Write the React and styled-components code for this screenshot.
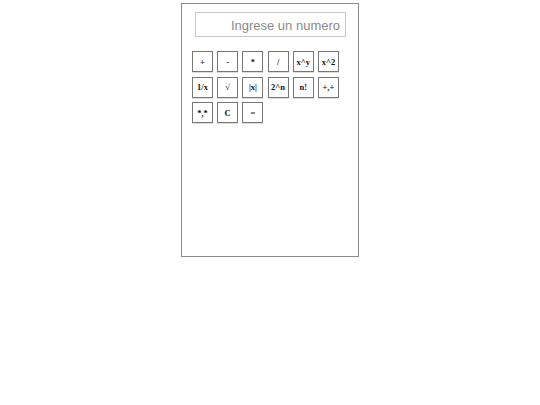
import React from 'react';
import styled, { createGlobalStyle } from 'styled-components';

const GlobalStyle = createGlobalStyle`
  body {
    margin: 0;
    background: #fff;
    font-family: "Liberation Serif", serif;
  }
`;

const Calculator = styled.div`
  box-sizing: border-box;
  width: 178px;
  height: 254px;
  margin: 3px auto 0;
  border: 1px solid #8a8a8a;
  padding: 8px 12px 0 10px;
  display: flex;
  flex-direction: column;
`;

const Display = styled.input`
  box-sizing: border-box;
  width: 151px;
  height: 25px;
  margin-left: 3px;
  border: 1px solid #c8c8c8;
  padding: 1px 5px 0;
  text-align: right;
  font-family: "Liberation Sans", Arial, sans-serif;
  font-size: 13px;
  color: #333;
  outline: none;
  &::placeholder {
    color: #8a8a8a;
  }
`;

const Keys = styled.div`
  display: grid;
  grid-template-columns: repeat(6, 21px);
  grid-auto-rows: 21px;
  column-gap: 4.2px;
  row-gap: 4.5px;
  margin-top: 14px;
`;

const Key = styled.button`
  box-sizing: border-box;
  width: 21px;
  height: 21px;
  padding: 0;
  background: #fff;
  border: 1px solid #777;
  box-shadow: 0 1px 0 #ddd;
  font-family: "Liberation Serif", "Times New Roman", serif;
  font-weight: bold;
  font-size: 8.5px;
  color: #111;
  cursor: pointer;
  display: flex;
  align-items: center;
  justify-content: center;
`;

const keys = [
  '+', '-', '*', '/', 'x^y', 'x^2',
  '1/x', '√', '|x|', '2^n', 'n!', '+,+',
  '*,*', 'C', '=',
];

export default function App() {
  return (
    <>
      <GlobalStyle />
      <Calculator>
        <Display placeholder="Ingrese un numero" />
        <Keys>
          {keys.map(k => (
            <Key key={k}>{k}</Key>
          ))}
        </Keys>
      </Calculator>
    </>
  );
}
